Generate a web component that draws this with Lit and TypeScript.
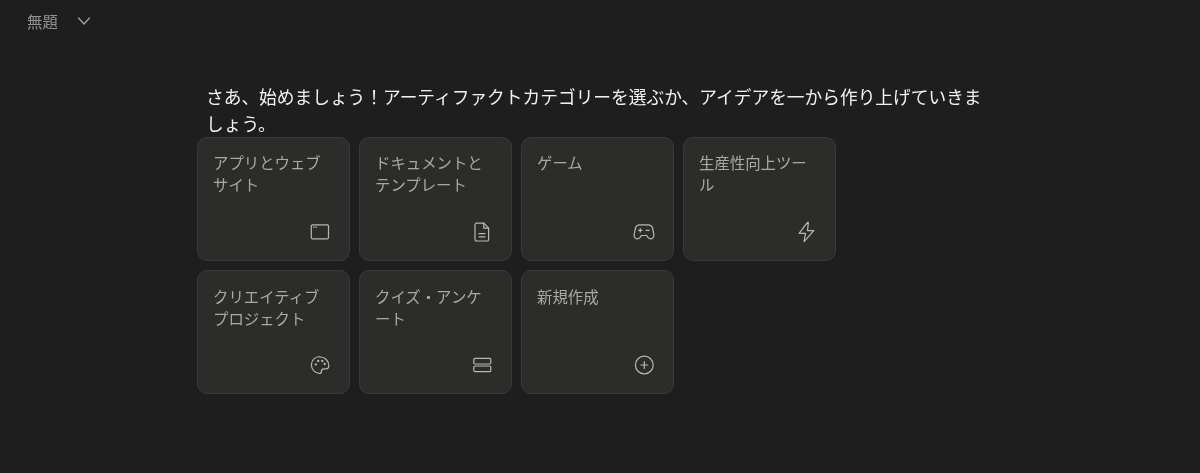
import { LitElement, html, css, svg } from "lit";
import { customElement } from "lit/decorators.js";

const s = (c: unknown) => html`<svg class="icon" viewBox="0 0 24 24" fill="none" stroke="currentColor" stroke-width="1.2" stroke-linecap="round" stroke-linejoin="round">${c}</svg>`;

const icons = {
  window: s(svg`<rect x="3.300" y="4.800" width="17.200" height="14" rx="1.200"/><path d="M5.500 7.100h.7M7.900 7.100h.7"/>`),
  doc: s(svg`<path d="M6.600 3.200h7.200l4.800 5v11.200a1.600 1.600 0 0 1-1.600 1.600H6.600A1.600 1.600 0 0 1 5 19.400V4.800a1.600 1.600 0 0 1 1.600-1.600Z"/><path d="M13.800 3.200v5h4.800M9 13.600h6M9 16.800h6"/>`),
  game: s(svg`<path d="M7.800 4.800h8.400c2.100 0 3.700 1.200 4.300 3.200l1.300 6.100c.6 2.700-1 4.800-3 4.800-1.200 0-2.100-.6-2.900-1.600l-1.300-1.800H9.400l-1.300 1.800c-.8 1-1.700 1.600-2.900 1.600-2 0-3.600-2.100-3-4.800L3.500 8c.6-2 2.200-3.200 4.300-3.200Z"/><path d="M6.600 10.300h3.400M8.300 8.600V12M14 10.300h3.200"/>`),
  bolt: s(svg`<path d="M13.500 2.300 5.100 13.300h6.400l-1.400 8.400 9.700-11h-6.300l.9-8.400Z"/>`),
  palette: s(svg`<path d="M12 3.500c-4.800 0-8.600 3.700-8.600 8.400s3.900 8.500 8 8.500c1.400 0 2-.9 2-2 0-1.400 1-2.500 2.400-2.500h2.200c1.700 0 2.800-1.200 2.800-3.100 0-5-3.900-8.800-8.800-8.800Z"/><circle cx="7.800" cy="11.500" r=".55"/><circle cx="10.200" cy="8" r=".55"/><circle cx="14.300" cy="8" r=".55"/><circle cx="16.700" cy="11" r=".55"/>`),
  rows: s(svg`<rect x="3.800" y="5.400" width="17" height="5.600" rx="1.200"/><rect x="3.800" y="13" width="17" height="5.600" rx="1.200"/>`),
  plus: s(svg`<circle cx="12.300" cy="12" r="8.900"/><path d="M12.300 8.500v7M8.800 12h7"/>`),
};

const items: [string, unknown][] = [
  ["アプリとウェブサイト", icons.window],
  ["ドキュメントとテンプレート", icons.doc],
  ["ゲーム", icons.game],
  ["生産性向上ツール", icons.bolt],
  ["クリエイティブプロジェクト", icons.palette],
  ["クイズ・アンケート", icons.rows],
  ["新規作成", icons.plus],
];

@customElement("app-root")
export class AppRoot extends LitElement {
  static styles = css`
    :host {
      display: block;
      min-height: 473px;
      background: #1e1e1e;
      font-family: "Noto Sans CJK JP", "Noto Sans", sans-serif;
      overflow: hidden;
    }
    .top {
      display: flex;
      align-items: center;
      gap: 18px;
      height: 41px;
      padding-left: 27px;
      color: #939390;
      font-size: 15.4px;
      font-weight: 400;
    }
    .chev {
      width: 16px;
      height: 16px;
      color: #a8a8a3;
    }
    .main {
      width: 800px;
      margin: 42px 0 0 196.6px;
    }
    .msg {
      margin: 0;
      padding-left: 9px;
      width: 785px;
      font-size: 17.72px;
      line-height: 27px;
      color: #f2f2f0;
      font-weight: 400;
      height: 53.700px;
    }
    .msg span, .label, .top span {
      will-change: transform;
      display: block;
    }
    .grid {
      display: grid;
      grid-template-columns: repeat(4, 153.2px);
      grid-auto-rows: 124px;
      gap: 9.500px 8.800px;
    }
    .card {
      box-sizing: border-box;
      display: flex;
      flex-direction: column;
      justify-content: space-between;
      padding: 14.500px 16.500px 16px 15.500px;
      background: #2c2c2b;
      border: 1px solid #393938;
      border-radius: 10px;
      color: #a9a9a4;
      font-size: 15.4px;
      font-weight: 400;
      line-height: 21.5px;
    }
    .label {
      word-break: break-all;
    }
    .icon-wrap {
      display: flex;
      justify-content: flex-end;
      color: #b8b8b3;
    }
    .icon {
      width: 24px;
      height: 24px;
      display: block;
    }
  `;

  render() {
    return html`
      <div class="top">
        <span>無題</span>
        <svg class="chev" viewBox="0 0 16 16" fill="none" stroke="currentColor" stroke-width="1.2" stroke-linecap="round" stroke-linejoin="round"><path d="M2.500 5l5.500 6 5.500-6"/></svg>
      </div>
      <div class="main">
        <p class="msg"><span>さあ、始めましょう！アーティファクトカテゴリーを選ぶか、アイデアを一から作り上げていきましょう。</span></p>
        <div class="grid">
          ${items.map(
            ([t, i]) => html`<div class="card"><div class="label">${t}</div><div class="icon-wrap">${i}</div></div>`
          )}
        </div>
      </div>
    `;
  }
}
